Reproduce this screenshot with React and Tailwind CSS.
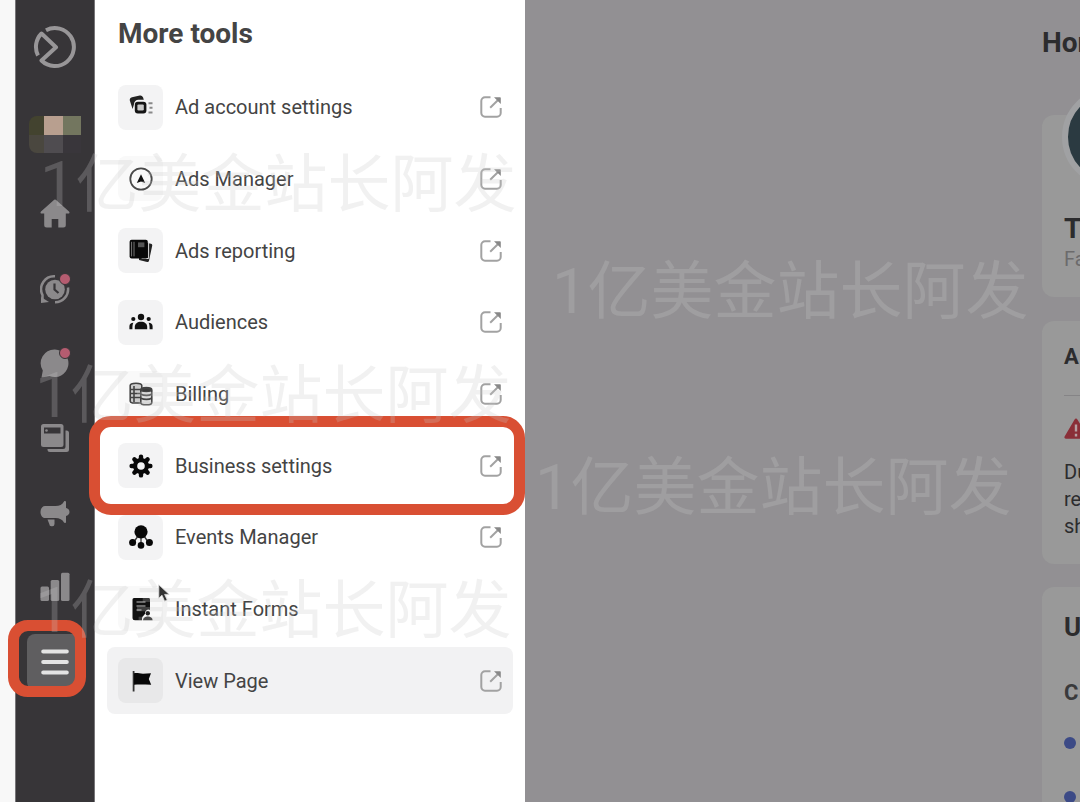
import { clsx } from 'clsx'

function AccountIcon() {
  return (
    <svg viewBox="0 0 24 24" className="w-6 h-6">
      <path d="M3.6 14 .8 5.600a3 3 0 0 1 2.200-3.400L10.800.6A3 3 0 0 1 14 2.300l.8 2.400H9.500a4.500 4.500 0 0 0-4.500 4.500z" fill="#222" />
      <rect x="5.800" y="6.800" width="11.600" height="11.800" rx="3" fill="#151515" />
      <rect x="8.400" y="9.400" width="6.400" height="6" rx="1.200" fill="#c9c9c9" />
      <path d="M19.500 8.200h4M20.500 12.800h3M19.500 17.500h4" stroke="#888" strokeWidth="2" />
    </svg>
  )
}

function AdsManagerIcon() {
  return (
    <svg viewBox="0 0 24 24" className="w-6 h-6">
      <circle cx="12" cy="12" r="10.700" fill="none" stroke="#4a4a4a" strokeWidth="1.800" />
      <path d="M12 7.200 16.200 16 12 14.400 7.800 16z" fill="#111" />
    </svg>
  )
}

function ReportingIcon() {
  return (
    <svg viewBox="0 0 24 24" className="w-6 h-6">
      <path d="m18 4 4 .8a1.600 1.600 0 0 1 1.200 1.900l-3.200 15a1.600 1.600 0 0 1-1.900 1.200L10 21v-2.200h8z" fill="#222" />
      <path d="M19.600 3v16.500h-7" fill="none" stroke="#ddd" strokeWidth="1" />
      <rect x="0.600" y="0.800" width="18.200" height="18.600" rx="2" fill="#080808" />
      <path d="M2.600 2.800v14.600M5 2.800v14.600" stroke="#777" strokeWidth="1" />
      <rect x="9" y="3.400" width="6.400" height="4.800" fill="#555" />
    </svg>
  )
}

function AudiencesIcon() {
  return (
    <svg viewBox="0 0 24 24" className="w-6 h-6" fill="#111">
      <circle cx="12" cy="7" r="3.200" />
      <circle cx="4.300" cy="9" r="2.100" />
      <circle cx="19.700" cy="9" r="2.100" />
      <path d="M5.800 19.200v-2.400c0-3 2.600-5 6.200-5s6.200 2 6.200 5v2.400z" />
      <path d="M.4 19.200v-3c0-2 1.500-3.500 4-3.500-.8 1.400-1 2.800-1 6.500zM23.600 19.200v-3c0-2-1.500-3.500-4-3.500.8 1.400 1 2.800 1 6.500z" />
    </svg>
  )
}

function BillingIcon() {
  return (
    <svg viewBox="0 0 24 24" className="w-6 h-6" stroke="#444" strokeWidth="1.600">
      <path d="M1.200 3.600C1.200 2 4 1.200 7 1.200s5.800.8 5.800 2.400V21H3.400c-1.300-.3-2.200-.9-2.200-1.800z" fill="#ccc" />
      <path d="M1.500 7.500h11M1.500 11.500h11M1.500 15.500h11M5 4v16" fill="none" />
      <path d="M11.800 8c0-1.600 2.400-2.400 5.500-2.400s5.500.8 5.500 2.400v12.400c0 1.600-2.400 2.400-5.500 2.400s-5.500-.8-5.500-2.400z" fill="#ddd" />
      <path d="M12 12.200c3 1.600 8 1.600 10.600 0M12 16.200c3 1.600 8 1.600 10.600 0" fill="none" />
      <ellipse cx="17.300" cy="8" rx="5" ry="1.400" fill="#333" />
    </svg>
  )
}

function GearIcon() {
  return (
    <svg viewBox="0 0 24 24" className="w-6 h-6">
      <g stroke="#080808" strokeWidth="4.400" strokeLinecap="round">
        <path d="M12 2.600v18.800M2.600 12h18.800M5.400 5.400l13.200 13.200M18.600 5.400 5.400 18.600" />
      </g>
      <circle cx="12" cy="12" r="8" fill="#080808" />
      <circle cx="12" cy="12" r="3.800" fill="#f3f3f4" />
    </svg>
  )
}

function EventsIcon() {
  return (
    <svg viewBox="0 0 24 24" className="w-6 h-6" fill="#080808">
      <path d="M12 7v14M12 7 4 18M12 7l8 11" stroke="#333" strokeWidth="1.300" />
      <circle cx="12" cy="6.800" r="6.600" />
      <circle cx="3.600" cy="17.400" r="3.500" />
      <circle cx="20.400" cy="17.400" r="3.500" />
      <circle cx="12" cy="20.400" r="3.300" />
    </svg>
  )
}

function FormsIcon() {
  return (
    <svg viewBox="0 0 24 24" className="w-6 h-6">
      <path d="M5 1h15a1.500 1.500 0 0 1 1 1.400V13a3.500 3.500 0 0 0-5 3.500c0 1.600-3 2.500-3 5v1.800H6a2.500 2.500 0 0 1-2.500-2.500V2.500A1.500 1.500 0 0 1 5 1z" fill="#111" />
      <path d="M7.500 5h9M7.500 9h9M7.500 13h5" stroke="#888" strokeWidth="1.500" />
      <circle cx="18.800" cy="16.300" r="2.200" fill="#222" />
      <path d="M14 23.300c.2-2.700 2-3.800 4.800-3.800s4.600 1.100 4.800 3.800z" fill="#222" />
    </svg>
  )
}

function FlagIcon() {
  return (
    <svg viewBox="0 0 24 24" className="w-6 h-6">
      <path d="M4.600 2v20.500" stroke="#333" strokeWidth="1.800" />
      <path d="M5 4.200c3.600-.6 5.400.5 9 .5 2.600 0 5.200-.2 8-.5L19.800 10l2.400 5.800c-6 0-11-.5-17.200 0z" fill="#080808" />
    </svg>
  )
}

function OpenIcon() {
  return (
    <svg viewBox="0 0 22 22" className="w-[22px] h-[22px] shrink-0" fill="none" stroke="#a2a2a2" strokeWidth="2">
      <path d="M10.500 1.300H5A3.700 3.700 0 0 0 1.300 5v12A3.700 3.700 0 0 0 5 20.700h12a3.700 3.700 0 0 0 3.700-3.700v-5" />
      <path d="m10.200 11.800 7.600-7.600" />
      <path d="M14 1.200h6a.8.8 0 0 1 .8.8v6z" fill="#888" stroke="none" />
    </svg>
  )
}

const tools = [
  { label: 'Ad account settings', icon: AccountIcon, open: true },
  { label: 'Ads Manager', icon: AdsManagerIcon, open: true, faint: true },
  { label: 'Ads reporting', icon: ReportingIcon, open: true },
  { label: 'Audiences', icon: AudiencesIcon, open: true },
  { label: 'Billing', icon: BillingIcon, open: true, faint: true },
  { label: 'Business settings', icon: GearIcon, open: true, marked: true },
  { label: 'Events Manager', icon: EventsIcon, open: true },
  { label: 'Instant Forms', icon: FormsIcon, faint: true },
  { label: 'View Page', icon: FlagIcon, open: true, active: true },
]

const navItems = [
  {
    label: 'Home',
    icon: <path d="M14.200.8a1.300 1.300 0 0 1 1.600 0L29 12.400c1 1 .5 2.200-.8 2.200h-2.400V26a2.500 2.500 0 0 1-2.500 2.500h-5V20h-6.600v8.500h-5A2.500 2.500 0 0 1 4.200 26V14.600H1.800c-1.300 0-1.800-1.200-.8-2.200z" fill="currentColor" />,
  },
  {
    label: 'Activity',
    dot: true,
    icon: (
      <>
        <path d="M2.500 25V21A13 13 0 0 1 15 2.200M28 13.500A13 13 0 0 1 15 28.200" fill="none" stroke="currentColor" strokeWidth="2.500" />
        <path d="M1 29v-6l8 5z" fill="currentColor" />
        <circle cx="15" cy="15.500" r="9.800" fill="currentColor" />
        <path d="M14.500 9.500v6l4 3.500" fill="none" stroke="#373538" strokeWidth="2.200" />
      </>
    ),
  },
  {
    label: 'Inbox',
    dot: true,
    icon: <path d="M15 1.500a13.800 13.800 0 1 1-5.500 26.600L1.500 29.500l1.300-7A13.800 13.800 0 0 1 15 1.500z" fill="currentColor" />,
  },
  {
    label: 'Content',
    icon: (
      <>
        <path d="M25.500 7.500h1a2.500 2.500 0 0 1 2.500 2.500v16.500a2.500 2.500 0 0 1-2.500 2.500H10a2.500 2.500 0 0 1-2.500-2.500v-.500h15.500a2.500 2.500 0 0 0 2.500-2.500z" fill="currentColor" />
        <rect x="1" y="1" width="22.500" height="23" rx="2.500" fill="currentColor" />
        <path d="M4 4.500h16.500v6H4z" fill="#373538" />
        <circle cx="6.500" cy="7.500" r="1.300" fill="currentColor" />
      </>
    ),
  },
  {
    label: 'Ads',
    icon: (
      <>
        <path d="M5 8h10.500c4 0 7-1.500 8.500-4.500.6-.9 2-.5 2 .6v6c2 .3 3.500 1.800 3.500 3.900s-1.500 3.600-3.500 3.900v6c0 1.100-1.400 1.500-2 .6-1.500-3-4.500-4.500-8.500-4.500H5C2.300 20 .5 17.300.5 14S2.300 8 5 8z" fill="currentColor" />
        <path d="M7.500 21.500h7V26a2.200 2.200 0 0 1-2.200 2.200h-.8A2.200 2.200 0 0 1 9.300 26z" fill="currentColor" />
      </>
    ),
  },
  {
    label: 'Insights',
    icon: (
      <>
        <rect x="0.500" y="14.500" width="8.500" height="14.500" rx="1.500" fill="currentColor" />
        <rect x="10.700" y="8" width="8.500" height="21" rx="1.500" fill="currentColor" />
        <rect x="21" y="0.800" width="8.500" height="28.200" rx="1.500" fill="currentColor" />
      </>
    ),
  },
  {
    label: 'All tools',
    active: true,
    icon: (
      <path d="M3.200 4.500h23.600M3.200 15h23.600M3.200 25.500h23.600" stroke="#e4e4e4" strokeWidth="4" strokeLinecap="round" />
    ),
  },
]

function Sidebar() {
  return (
    <aside className="w-20 shrink-0 bg-[#373538] border-x border-[#777578] flex flex-col items-center pt-[25px] text-[#8b898b]">
      <svg viewBox="0 0 44 44" className="w-11 h-11 shrink-0" fill="none" stroke="#989698" strokeWidth="4" strokeLinejoin="round">
        <path d="M5 30.500A19 19 0 0 1 8.500 8.500L23 22.300 8.500 35.500A19 19 0 1 0 13 5.200" />
      </svg>
      <div className="mt-[47px] w-[52px] h-[37px] shrink-0 grid grid-cols-[15px_19px_18px] grid-rows-2 rounded-l-lg overflow-hidden">
        <span className="bg-[#43432f]" />
        <span className="bg-[#b89f8f]" />
        <span className="bg-[#73765f]" />
        <span className="bg-[#4a473f]" />
        <span className="bg-[#4f4c50]" />
        <span className="bg-[#39363b]" />
      </div>
      <nav className="mt-6 w-full h-[522px] shrink-0 grid auto-rows-fr">
        {navItems.map(({ label, icon, dot, active }) => (
          <div key={label} className="relative flex items-center justify-center">
            <button
              aria-label={label}
              className={clsx('relative w-14 h-14 rounded-lg flex items-center justify-center', active && 'bg-[#5f5e60]')}
            >
              <svg viewBox="0 0 30 30" className="w-[30px] h-[30px]">
                {icon}
              </svg>
              {dot && <span className="absolute top-3 right-3 w-3 h-3 rounded-full bg-[#b55c70] border border-[#373538]" />}
            </button>
            {active && (
              <span className="absolute z-10 -left-2 right-2 -top-1 bottom-0.5 border-[11px] border-[#d94f33] rounded-[20px] pointer-events-none" />
            )}
          </div>
        ))}
      </nav>
    </aside>
  )
}

function ToolRow({ label, icon: Icon, open, faint, marked, active }) {
  return (
    <li className="relative">
      {marked && (
        <span className="absolute -left-[18px] -right-3 -top-4 -bottom-4 bg-white border-[11px] border-[#d94f33] rounded-[22px] pointer-events-none" />
      )}
      <a
        href="#"
        className={clsx('relative h-full flex items-center gap-3 px-[11px] rounded-lg', active && 'bg-[#f2f2f3]')}
      >
        <span
          className={clsx(
            'w-[45px] h-[45px] shrink-0 rounded-lg flex items-center justify-center',
            active ? 'bg-[#e8e8e9]' : faint ? 'bg-[#f9f9f9]' : 'bg-[#f3f3f4]'
          )}
        >
          <Icon />
        </span>
        <span className="flex-1 text-[20px] leading-6 text-[#444]">{label}</span>
        {open && <OpenIcon />}
      </a>
    </li>
  )
}

function ToolsPanel() {
  return (
    <section className="w-[430px] shrink-0 bg-white px-3 pt-4">
      <h2 className="pl-[11px] text-[28px] leading-9 font-bold text-[#444]">More tools</h2>
      <ul className="mt-[22px] h-[640px] grid auto-rows-fr gap-[5px]">
        {tools.map((tool) => (
          <ToolRow key={tool.label} {...tool} />
        ))}
      </ul>
    </section>
  )
}

function HomePage() {
  return (
    <main className="flex-1 min-w-0 overflow-hidden bg-[#929093] pl-[517px] pt-[25px] text-[#2c2c2e]">
      <div className="w-[500px]">
        <h1 className="text-[28px] leading-9 font-bold">Home</h1>

        <div className="mt-[54px] h-[182px] bg-[#999] rounded-xl pl-[22px]">
          <div className="-ml-0.5 -mt-7 inline-block align-top w-[100px] h-[100px] rounded-full bg-[#2b3a41] border-[6px] border-[#a0a1a3]" />
          <p className="mt-[26px] text-[28px] leading-8 font-bold">T</p>
          <p className="text-[20px] leading-7 text-[#6c6b6c]">Fa</p>
        </div>

        <div className="mt-6 h-[243px] bg-[#999] rounded-xl pl-[22px] pt-[22px]">
          <h3 className="text-[22px] leading-7 font-bold">A</h3>
          <hr className="mt-6 border-[#858486]" />
          <svg viewBox="0 0 24 21" className="mt-[22px] w-6 h-[21px]">
            <path d="M10.600 1.400a1.600 1.600 0 0 1 2.800 0l10 17.200c.6 1-.1 2.200-1.300 2.200H1.900C.7 20.800 0 19.600.6 18.600z" fill="#8a2f38" />
            <path d="M12 6.500v7M12 15.800v2.700" stroke="#b5a0a2" strokeWidth="2.400" />
          </svg>
          <p className="mt-5 text-[20px] leading-[27px]">
            Du
            <br />
            re
            <br />
            sh
          </p>
        </div>

        <div className="mt-[23px] h-[300px] bg-[#999] rounded-xl pl-[22px] pt-6">
          <h3 className="text-[26px] leading-8 font-bold">U</h3>
          <h4 className="mt-9 text-[22px] leading-7 font-bold text-[#3a3a3c]">C</h4>
          <ul className="mt-[30px] flex flex-col gap-[42px]">
            <li className="w-3 h-3 rounded-full bg-[#3c4a86]" />
            <li className="w-3 h-3 rounded-full bg-[#3c4a86]" />
          </ul>
        </div>
      </div>
    </main>
  )
}

const stamps = [
  'left-[40px] top-[137px]',
  'left-[35px] top-[348px]',
  'left-[35px] top-[563px]',
  'left-[552px] top-[244px]',
  'left-[535px] top-[440px]',
]

export default function App() {
  return (
    <div className="relative h-screen flex overflow-hidden bg-[#f8f8f8] pl-[15px] font-['Roboto','Noto_Sans_CJK_SC',sans-serif]">
      <Sidebar />
      <ToolsPanel />
      <HomePage />

      {stamps.map((pos) => (
        <span
          key={pos}
          className={clsx('absolute z-20 text-[63px] leading-[96px] whitespace-nowrap text-[#c8c8c8]/25 pointer-events-none select-none', pos)}
        >
          1亿美金站长阿发
        </span>
      ))}

      <svg viewBox="0 0 12 18" className="absolute z-30 left-[158px] top-[584px] w-3 h-[18px] pointer-events-none">
        <path d="M.8.8v13.400l3.200-3 2.600 6 2.600-1.200-2.600-5.600h4.600z" fill="#333" stroke="#ddd" strokeWidth=".8" />
      </svg>
    </div>
  )
}
